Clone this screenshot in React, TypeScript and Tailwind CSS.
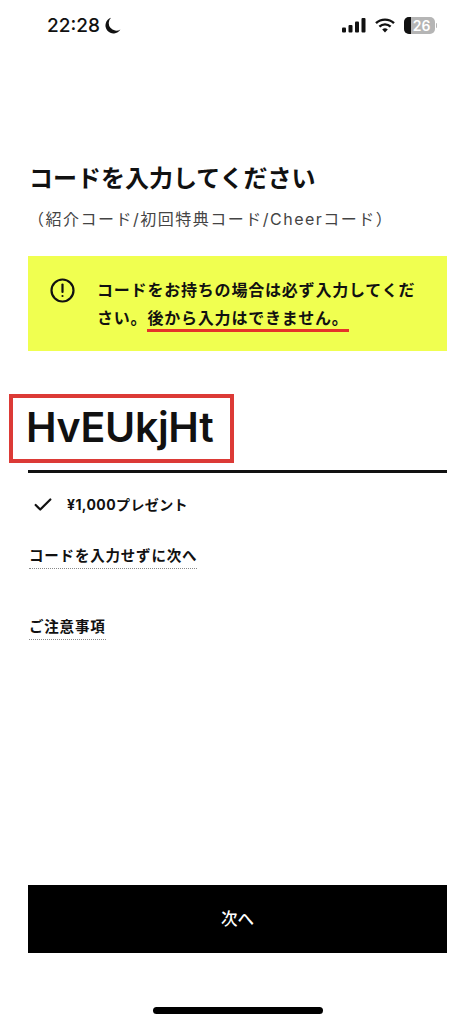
import React from 'react';
import { Check } from 'lucide-react';

const jp = "font-['Inter','Noto_Sans_CJK_JP','Noto_Sans',sans-serif]";

const StatusBar: React.FC = () => (
  <div className="flex h-[50px] items-center justify-between pl-[47px] pr-[38px] pt-[1px]">
    <div className="flex items-center gap-[5px]">
      <span className="text-[19px] font-medium leading-none text-[#111]">22:28</span>
      <svg width="16" height="17" viewBox="0 0 16 17">
        <path d="M6 .8a8 8 0 1 0 9.4 11.6A7.5 7.5 0 0 1 6 .8z" fill="#111" />
      </svg>
    </div>
    <div className="flex items-center gap-[9px]">
      <svg width="24" height="15" viewBox="0 0 24 15" fill="#111">
        <rect x="0" y="9.5" width="4" height="5" rx="1" />
        <rect x="6.5" y="7" width="4" height="7.5" rx="1" />
        <rect x="13" y="3.5" width="4" height="11" rx="1" />
        <rect x="19.5" y="0" width="4" height="14.5" rx="1" />
      </svg>
      <svg width="20" height="15" viewBox="0 0 20 15" fill="none" stroke="#111" strokeWidth="2.4">
        <path d="M1 5.2a13 13 0 0 1 18 0" />
        <path d="M4.4 8.6a8.2 8.2 0 0 1 11.2 0" />
        <path d="M10 14.6l-2.8-3a4 4 0 0 1 5.6 0z" fill="#111" stroke="none" />
      </svg>
      <div className="flex items-center gap-[1px]">
        <div className="relative flex h-[17px] w-[31px] overflow-hidden rounded-[5px] bg-[#b5b5b5]">
          <div className="h-full w-[7px] bg-[#111]" />
          <span className="absolute inset-0 flex items-center justify-center pl-[4px] text-[14px] font-semibold leading-none text-white">26</span>
        </div>
        <div className="h-[5px] w-[1px] rounded-r-full bg-[#b5b5b5]" />
      </div>
    </div>
  </div>
);

const App: React.FC = () => {
  return (
    <div className={`flex h-[1024px] w-[475px] flex-col overflow-hidden bg-white text-[#111] ${jp}`}>
      <StatusBar />

      <div className="flex flex-1 flex-col px-[28px]">
        <h1 className="mt-[111px] pl-[1px] text-[24px] font-bold leading-[36px]">コードを入力してください</h1>
        <p className="mt-[11px] whitespace-nowrap text-[16px] leading-[22px] tracking-[1.5px] text-[#444]">（紹介コード/初回特典コード/Cheerコード）</p>

        <div className="mt-[26px] flex h-[95px] bg-[#f0ff50] pl-[22px] pr-[20px] pt-[20px]">
          <svg className="mt-[2px] shrink-0" width="25" height="25" viewBox="0 0 25 25" fill="none" stroke="#111" strokeWidth="2.2">
            <circle cx="12.5" cy="12.5" r="11" />
            <path d="M12.5 6.5v7.5" strokeLinecap="round" />
            <circle cx="12.5" cy="18" r="1.1" fill="#111" stroke="none" />
          </svg>
          <p className="ml-[22px] text-[16px] font-bold leading-[28px] tracking-[0.8px]">
            コードをお持ちの場合は必ず入力してください。
            <span className="border-b-[3px] border-[#e5332a] pb-[1px]">後から入力はできません。</span>
          </p>
        </div>

        <div className="-ml-[19px] mt-[43px] flex h-[69px] w-[225px] items-center border-[4px] border-[#dc3a36] pb-[2px] pl-[13px]">
          <span className="text-[41px] font-semibold leading-none tracking-[-0.3px]">HvEUkjHt</span>
        </div>
        <div className="mt-[7px] h-[2.5px] bg-[#111]" />

        <div className="mt-[21px] flex items-center pl-[4px]">
          <Check size={22} strokeWidth={2.4} className="text-[#111]" />
          <span className="ml-[13px] text-[14px] font-bold leading-[20px] tracking-[0.4px]">¥1,000プレゼント</span>
        </div>

        <div className="mt-[27px] pl-[1px]">
          <a className="inline-block border-b border-dotted border-[#888] pb-[1px] text-[14.5px] font-bold leading-[22px] tracking-[0.8px]">コードを入力せずに次へ</a>
        </div>
        <div className="mt-[45px] pl-[1px]">
          <a className="inline-block border-b border-dotted border-[#888] pb-[1px] text-[14.5px] font-bold leading-[22px] tracking-[0.8px]">ご注意事項</a>
        </div>

        <div className="mt-auto flex h-[68px] items-center justify-center bg-black text-[16.5px] font-medium text-white">次へ</div>

        <div className="mb-[10px] mt-[54px] flex justify-center">
          <div className="h-[7px] w-[170px] rounded-full bg-black" />
        </div>
      </div>
    </div>
  );
};

export default App;
